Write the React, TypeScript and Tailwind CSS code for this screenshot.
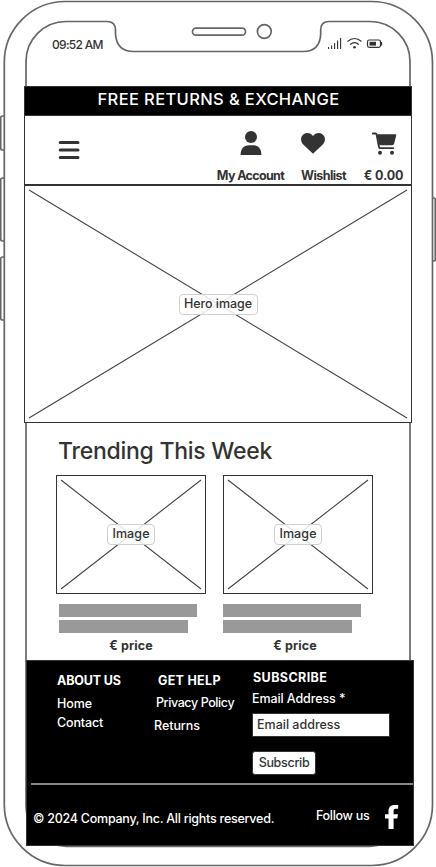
import React from "react";

function PhoneFrame() {
  return (
    <svg className="absolute inset-0" width="436" height="867" fill="none" stroke="#666" strokeWidth="1.7">
      <path d="M65 1.5H371A61 61 0 0 1 432.5 63V804A61 61 0 0 1 371 865.5H65A61 61 0 0 1 4.3 804V63A61 61 0 0 1 65 1.5Z" />
      <path d="M66 21.5H107Q115.5 21.5 115.5 30V34Q116.5 51.5 134 51.5H303Q320 51.5 320.7 34V30Q320.7 21.5 329 21.5H370A40 40 0 0 1 410 62V806A40 40 0 0 1 370 846.3H66A40 40 0 0 1 26 806V62A40 40 0 0 1 66 21.5Z" />
      <rect x="192.5" y="28.2" width="53" height="7" rx="3.5" />
      <circle cx="264.3" cy="31.5" r="6.9" />
      <path d="M4 116H2.5Q.7 116 .7 118V148Q.7 150 2.5 150H4M4 178H2.5Q.7 178 .7 180V239Q.7 241 2.5 241H4M4 257H2.5Q.7 257 .7 259V318Q.7 320 2.5 320H4M433 198H434Q435.3 198 435.3 200V259Q435.3 261 434 261H433" />
    </svg>
  );
}

function Placeholder({ label, w, h, className, labelClass }: { label: string; w: number; h: number; className: string; labelClass: string }) {
  return (
    <div className={`relative flex items-center justify-center border border-[#333] bg-white ${className}`}>
      <svg className="absolute -top-px -left-px" width={w} height={h} stroke="#444" strokeWidth="1.1">
        <path d={`M5 5L${w - 5} ${h - 5}M5 ${h - 5}L${w - 5} 5`} />
      </svg>
      <span className={`relative flex h-[21px] items-center justify-center rounded-[4px] border border-[#d0d0d0] bg-white/85 pb-px leading-4 ${labelClass}`}>{label}</span>
    </div>
  );
}

function Product() {
  return (
    <div className="w-[150px]">
      <Placeholder label="Image" w={150} h={119} className="h-[119px] w-[150px]" labelClass="w-12 tracking-[0.1px]" />
    </div>
  );
}

function Bars({ className }: { className: string }) {
  return (
    <div className={className}>
      <div className="h-[13px] w-[138px] bg-[#999]" />
      <div className="mt-[3px] h-[13px] w-[129px] bg-[#999]" />
      <div className="mt-[5px] w-[144px] text-center font-bold tracking-[0.1px]">€ price</div>
    </div>
  );
}

export default function App() {
  return (
    <div className="relative h-[867px] w-[436px] overflow-hidden bg-white font-['Inter',sans-serif] text-[12.5px] font-medium leading-4 whitespace-nowrap text-[#333]">
      <PhoneFrame />
      <div className="relative ml-6 flex w-[390px] flex-col">
        <div className="flex h-[86px] items-start pt-[37px]">
          <span className="ml-7 text-[12px] tracking-[-0.7px]">09:52 AM</span>
          <svg className="ml-auto mr-[31px]" width="55" height="14" viewBox="328 37 55 14" fill="none" stroke="#333">
            <path d="M328.6 47V49M331.6 45.5V49M334.6 43V49M337.6 40.5V49M340.6 38V49" strokeWidth="1.1" />
            <path d="M347.5 41.5Q354.5 35.5 361.5 41.5M350.2 44.5Q354.5 40.8 358.8 44.5" strokeWidth="1.2" />
            <circle cx="354.5" cy="47.3" r="1.3" fill="#333" stroke="none" />
            <rect x="367.5" y="40" width="13" height="7.4" rx="1.8" strokeWidth="1.2" />
            <rect x="369.5" y="41.8" width="6.5" height="3.8" fill="#333" stroke="none" />
            <path d="M381.5 42V45.5" strokeWidth="1.3" />
          </svg>
        </div>

        <div className="flex h-[30px] w-[388px] items-center justify-center border border-[#333] bg-black pb-[4px] pl-px text-[16.5px] text-white tracking-[0.37px]">
          FREE RETURNS &amp; EXCHANGE
        </div>

        <header className="flex h-[70px] w-[388px] items-start border-x border-b-2 border-[#333] bg-white font-bold">
          <svg className="ml-[33px] mt-[24px]" width="22" height="20" stroke="#333" strokeWidth="3" strokeLinecap="round">
            <path d="M2.2 2.5H20M2.2 10H20M2.2 17.5H20" />
          </svg>
          <div className="ml-[137px] flex w-[67px] flex-col items-center">
            <svg className="mt-[14px] ml-px" width="22" height="25" fill="#333">
              <circle cx="11" cy="7" r="6" />
              <path d="M.6 25C.6 18 4.5 15.3 9 15.3H13C17.5 15.3 21.4 18 21.4 25Z" />
            </svg>
            <div className="mt-[13px] tracking-[-0.65px]">My Account</div>
          </div>
          <div className="ml-[17px] flex w-[45px] flex-col items-start">
            <svg className="mt-[17px]" width="24" height="21" viewBox="0 0 24 21" fill="#333">
              <path d="M12 20.7L2 11.2C-1 8 -.3 3.5 2.3 1.5C5.5-.8 9.5-.2 12 3C14.5-.2 18.5-.8 21.7 1.5C24.3 3.5 25 8 22 11.2Z" />
            </svg>
            <div className="mt-[14px] tracking-[-0.55px]">Wishlist</div>
          </div>
          <div className="ml-[18px] flex w-[39px] flex-col items-center">
            <svg className="mt-[16px] ml-[2px]" width="25" height="23" viewBox="0 0 25 23" fill="#333">
              <path d="M5 2.3H23.2Q24.5 2.3 24.2 3.6L22.2 11.5Q21.8 13.2 20 13.2H7.4Z" />
              <path d="M.8 1.5H3.4Q4.4 1.5 4.6 2.5L7 15Q7.2 16.2 8.5 16.2H21.2" fill="none" stroke="#333" strokeWidth="1.8" strokeLinecap="round" />
              <circle cx="8" cy="20.7" r="2" />
              <circle cx="20" cy="20.7" r="2" />
            </svg>
            <div className="mt-[13px] tracking-[-0.1px]">€ 0.00</div>
          </div>
        </header>

        <Placeholder label="Hero image" w={388} h={238} className="h-[238px] w-[388px] -mt-px" labelClass="w-[79px] tracking-[-0.05px]" />

        <main className="h-[237px]">
          <h1 className="ml-[34px] pt-[12px] text-[23px] font-medium leading-8 tracking-[-0.26px]">Trending This Week</h1>
          <div className="ml-8 mt-[8px] flex gap-[17px]">
            <Product />
            <Product />
          </div>
          <div className="mt-[10px] flex">
            <Bars className="ml-[35px] w-[164px]" />
            <Bars className="w-[144px]" />
          </div>
        </main>

        <footer className="ml-[2px] h-[186px] w-[388px] border border-[#333] bg-black text-white">
          <div className="flex h-[122px]">
            <div className="ml-[30px] w-[98px] pt-[12px]">
              <div className="font-bold tracking-[-0.15px]">ABOUT US</div>
              <div className="mt-[7px] tracking-[-0.1px]">Home</div>
              <div className="mt-[3px] tracking-[-0.15px]">Contact</div>
            </div>
            <div className="w-[97px] pt-[12px]">
              <div className="ml-[3px] font-bold tracking-[0.3px]">GET HELP</div>
              <div className="ml-[1px] mt-[6px] tracking-[-0.4px]">Privacy Policy</div>
              <div className="-ml-px mt-[7px] tracking-[-0.05px]">Returns</div>
            </div>
            <div className="pt-[9px]">
              <div className="ml-px font-bold tracking-[0.4px]">SUBSCRIBE</div>
              <div className="mt-[5px] tracking-[-0.1px]">Email Address *</div>
              <div className="mt-[6px] flex h-6 w-[138px] items-center border border-[#333] bg-white pl-1 text-[#333] tracking-[0px]">Email address</div>
              <button className="mt-[14px] flex h-6 w-16 items-center justify-center rounded-[3px] border border-[#333] bg-white text-[#333] tracking-[-0.3px]">Subscrib</button>
            </div>
          </div>
          <div className="ml-1 h-[2px] bg-[#888]" />
          <div className="flex items-start">
            <div className="ml-[6px] mt-[26px] w-[283px] tracking-[-0.25px]">© 2024 Company, Inc. All rights reserved.</div>
            <div className="mt-[23px] w-[69px] tracking-[-0.3px]">Follow us</div>
            <svg className="mt-[20px]" width="14" height="24" viewBox="0 0 14 24" fill="#fff">
              <path d="M3.5 24V13.6H0V9.3H3.5V6C3.5 2 5.8 0 9.6 0H13.2V3.8H11C9.2 3.8 8.6 4.6 8.6 6.2V9.3H13L12.3 13.6H8.6V24Z" />
            </svg>
          </div>
        </footer>
      </div>
    </div>
  );
}
